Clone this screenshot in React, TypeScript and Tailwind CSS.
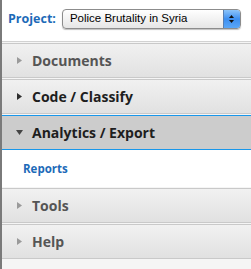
const sections = [
  { name: "Documents", state: "closed" },
  { name: "Code / Classify", state: "hover" },
  { name: "Analytics / Export", state: "open" },
  { name: "Tools", state: "closed" },
  { name: "Help", state: "closed" },
];

const RightArrow = ({ dark }: { dark: boolean }) => (
  <svg width="5" height="7" viewBox="0 0 5 7" className="shrink-0">
    <path d="M0 0 L5 3.5 L0 7 Z" fill={dark ? "#2e2e2e" : "#9a9a9a"} />
  </svg>
);

const DownArrow = () => (
  <svg width="7" height="5" viewBox="0 0 7 5" className="shrink-0">
    <path d="M0 0 L7 0 L3.5 5 Z" fill="#444" />
  </svg>
);

const App = () => {
  return (
    <div
      className="w-[251px] h-[269px] bg-[#f5f5f5] border-l-2 border-[#7a7a7a] flex flex-col overflow-hidden"
      style={{ fontFamily: '"Open Sans", sans-serif' }}
    >
      {/* Project picker */}
      <div className="h-[42px] shrink-0 bg-white border-b border-[#d2d2d2] flex items-center pl-[6px] gap-[6px] pb-[3px]">
        <span className="text-[12.5px] font-bold text-[#1d6ab8]">Project:</span>
        <div className="relative h-[20px] w-[179px] rounded-[4px] border border-[#8c8c8c] bg-gradient-to-b from-white to-[#e6e6e6] shadow-[0_1px_1px_rgba(0,0,0,0.25)] flex items-center overflow-hidden">
          <span
            className="pl-[7px] text-[11.5px] text-black flex-1"
            style={{ fontFamily: '"Liberation Sans", Arial, sans-serif' }}
          >
            Police Brutality in Syria
          </span>
          <div className="w-[17px] h-full bg-gradient-to-b from-[#8cc4fa] via-[#3d8ff0] to-[#5aa6f7] border-l border-[#5a7fb0] flex flex-col items-center justify-center gap-[2px]">
            <svg width="5" height="3" viewBox="0 0 5 3">
              <path d="M0 3 L2.5 0 L5 3 Z" fill="#111" />
            </svg>
            <svg width="5" height="3" viewBox="0 0 5 3">
              <path d="M0 0 L5 0 L2.5 3 Z" fill="#111" />
            </svg>
          </div>
        </div>
      </div>

      {/* Accordion */}
      <div className="flex flex-col">
        {sections.map((s) => (
          <div key={s.name}>
            {s.state === "open" ? (
              <>
                <div className="mt-[1px] h-[35px] bg-[#cccccc] border-y border-[#1997ea] flex items-center pl-[14px] gap-[9px]">
                  <DownArrow />
                  <span className="text-[14px] font-bold text-[#1e1e1e]">{s.name}</span>
                </div>
                <div className="h-[37px] bg-white flex items-center pl-[21px]">
                  <span className="text-[11.5px] font-bold text-[#1d6ab8]">Reports</span>
                </div>
              </>
            ) : (
              <div className="mt-[1px] h-[35px] bg-gradient-to-b from-[#f1f1f1] to-[#e1e1e1] border-y border-[#c9c9c9] flex items-center pl-[15px] gap-[10px]">
                <RightArrow dark={s.state === "hover"} />
                <span
                  className={
                    s.state === "hover"
                      ? "text-[14px] font-bold text-[#1e1e1e]"
                      : "text-[14px] font-bold text-[#555555]"
                  }
                >
                  {s.name}
                </span>
              </div>
            )}
          </div>
        ))}
      </div>
    </div>
  );
};

export default App;
